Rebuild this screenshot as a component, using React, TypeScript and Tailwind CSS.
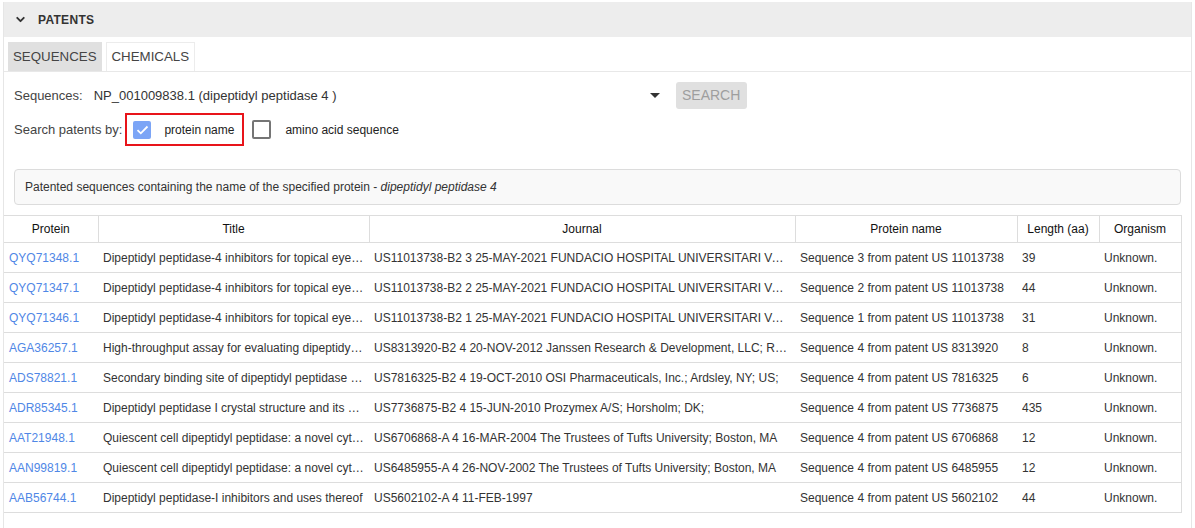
import React from 'react';
import { ChevronDown } from 'lucide-react';

interface PatentRow {
  protein: string;
  title: string;
  journal: string;
  proteinName: string;
  length: number;
  organism: string;
}

const rows: PatentRow[] = [
  {
    protein: 'QYQ71348.1',
    title: 'Dipeptidyl peptidase-4 inhibitors for topical eye treatment of neurodegenerative retinal diseases',
    journal: 'US11013738-B2 3 25-MAY-2021 FUNDACIO HOSPITAL UNIVERSITARI VALL D\'HEBRON',
    proteinName: 'Sequence 3 from patent US 11013738',
    length: 39,
    organism: 'Unknown.',
  },
  {
    protein: 'QYQ71347.1',
    title: 'Dipeptidyl peptidase-4 inhibitors for topical eye treatment of neurodegenerative retinal diseases',
    journal: 'US11013738-B2 2 25-MAY-2021 FUNDACIO HOSPITAL UNIVERSITARI VALL D\'HEBRON',
    proteinName: 'Sequence 2 from patent US 11013738',
    length: 44,
    organism: 'Unknown.',
  },
  {
    protein: 'QYQ71346.1',
    title: 'Dipeptidyl peptidase-4 inhibitors for topical eye treatment of neurodegenerative retinal diseases',
    journal: 'US11013738-B2 1 25-MAY-2021 FUNDACIO HOSPITAL UNIVERSITARI VALL D\'HEBRON',
    proteinName: 'Sequence 1 from patent US 11013738',
    length: 31,
    organism: 'Unknown.',
  },
  {
    protein: 'AGA36257.1',
    title: 'High-throughput assay for evaluating dipeptidyl peptidase I activity',
    journal: 'US8313920-B2 4 20-NOV-2012 Janssen Research & Development, LLC; Raritan, NJ; US;',
    proteinName: 'Sequence 4 from patent US 8313920',
    length: 8,
    organism: 'Unknown.',
  },
  {
    protein: 'ADS78821.1',
    title: 'Secondary binding site of dipeptidyl peptidase IV (DPIV)',
    journal: 'US7816325-B2 4 19-OCT-2010 OSI Pharmaceuticals, Inc.; Ardsley, NY; US;',
    proteinName: 'Sequence 4 from patent US 7816325',
    length: 6,
    organism: 'Unknown.',
  },
  {
    protein: 'ADR85345.1',
    title: 'Dipeptidyl peptidase I crystal structure and its uses',
    journal: 'US7736875-B2 4 15-JUN-2010 Prozymex A/S; Horsholm; DK;',
    proteinName: 'Sequence 4 from patent US 7736875',
    length: 435,
    organism: 'Unknown.',
  },
  {
    protein: 'AAT21948.1',
    title: 'Quiescent cell dipeptidyl peptidase: a novel cytoplasmic serine protease',
    journal: 'US6706868-A 4 16-MAR-2004 The Trustees of Tufts University; Boston, MA',
    proteinName: 'Sequence 4 from patent US 6706868',
    length: 12,
    organism: 'Unknown.',
  },
  {
    protein: 'AAN99819.1',
    title: 'Quiescent cell dipeptidyl peptidase: a novel cytoplasmic serine protease',
    journal: 'US6485955-A 4 26-NOV-2002 The Trustees of Tufts University; Boston, MA',
    proteinName: 'Sequence 4 from patent US 6485955',
    length: 12,
    organism: 'Unknown.',
  },
  {
    protein: 'AAB56744.1',
    title: 'Dipeptidyl peptidase-I inhibitors and uses thereof',
    journal: 'US5602102-A 4 11-FEB-1997',
    proteinName: 'Sequence 4 from patent US 5602102',
    length: 44,
    organism: 'Unknown.',
  },
];

const columns = [
  { label: 'Protein', width: 94 },
  { label: 'Title', width: 271 },
  { label: 'Journal', width: 426 },
  { label: 'Protein name', width: 222 },
  { label: 'Length (aa)', width: 82 },
  { label: 'Organism', width: 82 },
];

export default function App() {
  const [tab, setTab] = React.useState<'sequences' | 'chemicals'>('sequences');
  const [byName, setByName] = React.useState(true);
  const [bySequence, setBySequence] = React.useState(false);

  return (
    <div className="min-h-[528px] bg-white pt-[2px] pl-[3px] pr-[3px] font-['Liberation_Sans',Arial,sans-serif] text-[#333]">
      <div className="border-x border-[#e6e6e6] min-h-[526px]">
        {/* Header */}
        <div className="flex h-[35px] items-center bg-[#ededed] pl-[10px]">
          <ChevronDown className="h-[13px] w-[13px] text-[#333]" strokeWidth={3.5} />
          <span className="ml-[11px] text-[12px] font-bold tracking-[0.3px] text-[#333]">PATENTS</span>
        </div>

        {/* Tabs */}
        <div className="flex h-[35px] items-end gap-[4px] border-b border-[#e8e8e8] pl-[4px]">
          <button
            onClick={() => setTab('sequences')}
            className={`h-[29px] px-[5px] text-[13.3px] text-[#444] ${
              tab === 'sequences' ? 'bg-[#e0e0e0]' : 'border border-b-0 border-[#ececec] bg-white'
            }`}
          >
            SEQUENCES
          </button>
          <button
            onClick={() => setTab('chemicals')}
            className={`h-[29px] px-[5px] text-[13.3px] text-[#444] ${
              tab === 'chemicals' ? 'bg-[#e0e0e0]' : 'border border-b-0 border-[#ececec] bg-white'
            }`}
          >
            CHEMICALS
          </button>
        </div>

        {/* Sequence selector */}
        <div className="flex items-center pl-[10px] pt-[10px]">
          <span className="text-[13px] text-[#444]">Sequences:</span>
          <div className="ml-[11px] flex w-[570px] items-center justify-between">
            <span className="text-[13px] text-[#333]">NP_001009838.1 (dipeptidyl peptidase 4 )</span>
            <svg width="10" height="5" viewBox="0 0 10 5" className="mr-[4px]">
              <path d="M0 0 L10 0 L5 5 Z" fill="#333" />
            </svg>
          </div>
          <button className="ml-[12px] h-[27px] w-[71px] rounded-[3px] bg-[#e0e0e0] text-[14px] text-[#9e9e9e]">
            SEARCH
          </button>
        </div>

        {/* Search by */}
        <div className="mt-[4px] flex items-center pl-[10px]">
          <span className="text-[13px] text-[#444]">Search patents by:</span>
          <label className="ml-[3px] flex h-[33px] w-[119px] cursor-pointer items-center border-2 border-[#e8141a] pl-[6px]">
            <input type="checkbox" className="hidden" checked={byName} onChange={() => setByName(!byName)} />
            <span
              className={`flex h-[18px] w-[18px] items-center justify-center rounded-[2px] ${
                byName ? 'bg-[#7ca5f6]' : 'border-2 border-[#757575]'
              }`}
            >
              {byName && (
                <svg width="13" height="10" viewBox="0 0 13 10">
                  <path d="M1.5 5.2 L4.8 8.3 L11.5 1.5" stroke="white" strokeWidth="1.8" fill="none" />
                </svg>
              )}
            </span>
            <span className="ml-[13px] text-[12px] text-[#222]">protein name</span>
          </label>
          <label className="ml-[8px] flex cursor-pointer items-center">
            <input type="checkbox" className="hidden" checked={bySequence} onChange={() => setBySequence(!bySequence)} />
            <span
              className={`flex h-[19px] w-[19px] items-center justify-center rounded-[2px] ${
                bySequence ? 'bg-[#7ca5f6]' : 'border-2 border-[#757575]'
              }`}
            />
            <span className="ml-[14px] text-[12px] text-[#222]">amino acid sequence</span>
          </label>
        </div>

        {/* Info */}
        <div className="ml-[10px] mr-[10px] mt-[23px] flex h-[36px] items-center rounded-[4px] border border-[#dcdcdc] bg-[#f9f9f9] pl-[10px] text-[12px] text-[#333]">
          <span>
            Patented sequences containing the name of the specified protein -{' '}
            <em className="italic">dipeptidyl peptidase 4</em>
          </span>
        </div>

        {/* Table */}
        <div className="mt-[10px] pr-[10px]">
          <table className="w-full table-fixed border-collapse border-r border-[#ddd] text-[12px]">
            <colgroup>
              {columns.map((c) => (
                <col key={c.label} style={{ width: c.width }} />
              ))}
            </colgroup>
            <thead>
              <tr className="h-[27px] border-y border-[#ddd]">
                {columns.map((c, i) => (
                  <th
                    key={c.label}
                    className={`px-[5px] text-center font-normal text-[#111] ${
                      i < columns.length - 1 ? 'border-r border-[#ddd]' : ''
                    }`}
                  >
                    {c.label}
                  </th>
                ))}
              </tr>
            </thead>
            <tbody>
              {rows.map((r) => (
                <tr key={r.protein} className="h-[30px] border-b border-[#ddd]">
                  <td className="truncate px-[5px]">
                    <a href="#" className="text-[#4f87e6]">
                      {r.protein}
                    </a>
                  </td>
                  <td className="truncate px-[5px]">{r.title}</td>
                  <td className="truncate px-[5px]">{r.journal}</td>
                  <td className="truncate px-[5px]">{r.proteinName}</td>
                  <td className="truncate px-[5px]">{r.length}</td>
                  <td className="truncate px-[5px]">{r.organism}</td>
                </tr>
              ))}
            </tbody>
          </table>
        </div>
      </div>
    </div>
  );
}
